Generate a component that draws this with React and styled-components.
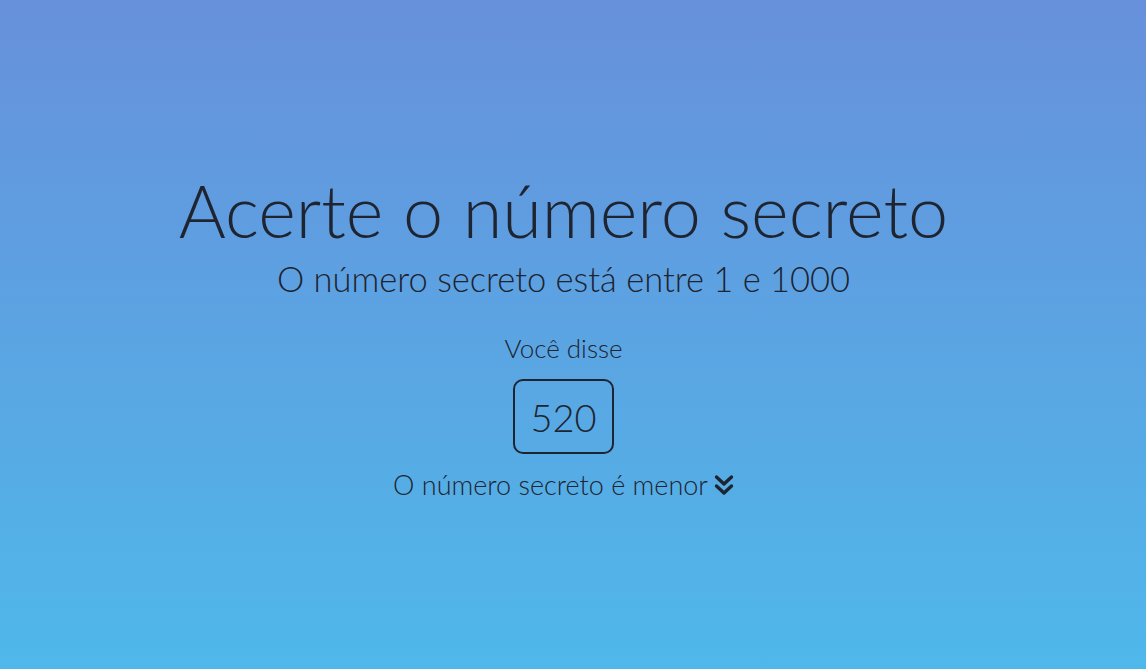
import React from "react";
import styled, { createGlobalStyle } from "styled-components";

const GlobalStyle = createGlobalStyle`
  * {
    box-sizing: border-box;
  }
  body {
    margin: 0;
    font-family: "Lato", "Inter", sans-serif;
    color: #1e2430;
  }
`;

const DoubleDown = () => (
  <svg width="20" height="22" viewBox="0 0 20 22" fill="none" stroke="currentColor" strokeWidth="3.4" strokeLinecap="round" strokeLinejoin="round">
    <path d="M2.5 3 L10 10 L17.5 3" />
    <path d="M2.5 12 L10 19 L17.5 12" />
  </svg>
);

const App = () => {
  const guess = 520;

  return (
    <Page>
      <GlobalStyle />
      <Title>Acerte o número secreto</Title>
      <Subtitle>O número secreto está entre 1 e 1000</Subtitle>
      <Said>Você disse</Said>
      <GuessBox>{guess}</GuessBox>
      <Hint>
        O número secreto é menor
        <DoubleDown />
      </Hint>
    </Page>
  );
};

const Page = styled.main`
  min-height: 100vh;
  display: flex;
  flex-direction: column;
  align-items: center;
  justify-content: center;
  background: linear-gradient(180deg, #6790db 0%, #4fb8ea 100%);
  padding: 4px 19px 0 0;
`;

const Title = styled.h1`
  font-size: 72px;
  font-weight: 300;
  margin: 0;
  line-height: 1.1;
`;

const Subtitle = styled.h3`
  font-size: 34.5px;
  font-weight: 300;
  margin: 7px 0 0;
  line-height: 1.2;
`;

const Said = styled.p`
  font-size: 26px;
  font-weight: 300;
  margin: 34px 0 0;
  line-height: 1.2;
`;

const GuessBox = styled.div`
  margin-top: 15px;
  width: 101px;
  height: 75px;
  border: 2px solid #1e2430;
  border-radius: 10px;
  display: flex;
  align-items: center;
  justify-content: center;
  font-size: 38px;
  font-weight: 300;
`;

const Hint = styled.p`
  margin: 15px 0 0;
  font-size: 27px;
  font-weight: 300;
  line-height: 1.2;
  display: flex;
  align-items: center;
  gap: 6px;
`;

export default App;
